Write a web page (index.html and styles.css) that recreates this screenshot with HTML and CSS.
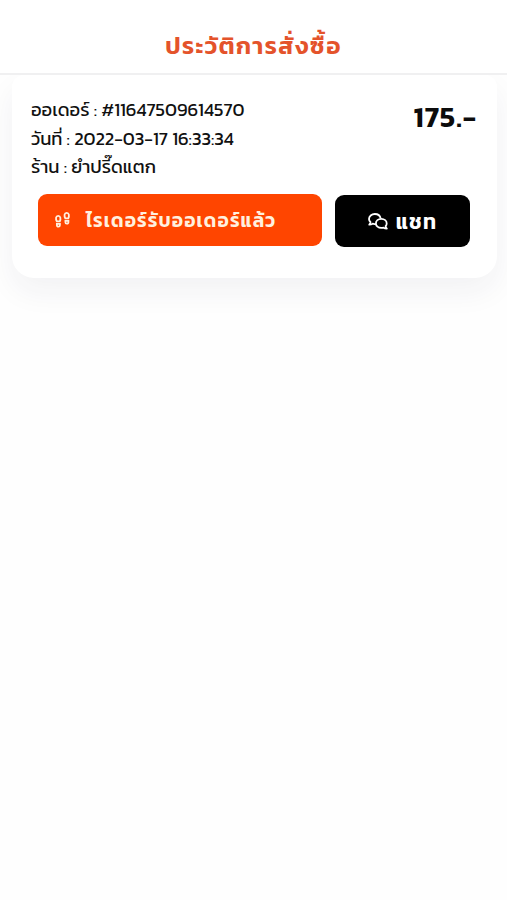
FILE: index.html
```html
<!DOCTYPE html>
<html lang="th">
<head>
<meta charset="utf-8">
<title>ประวัติการสั่งซื้อ</title>
<link rel="stylesheet" href="styles.css">
</head>
<body>
<header class="topbar"><h1 class="title">ประวัติการสั่งซื้อ</h1></header>
<main class="orders">
<article class="card">
<div class="summary">
<div class="details">
<p>ออเดอร์ : #11647509614570</p>
<p>วันที่ : 2022-03-17 16:33:34</p>
<p>ร้าน : ยำปรี๊ดแตก</p>
</div>
<strong class="price">175.-</strong>
</div>
<div class="actions">
<button class="btn status">
<svg class="steps" viewBox="0 0 18 18" fill="none" stroke="currentColor" stroke-width="1.8" aria-hidden="true">
<path d="M2.800 10.300C1.500 8 1.700 4.800 4.200 4.800s2.700 3.200 1.600 5.500z M11.300 7.300C10 5 10.200 1.800 12.700 1.800s2.700 3.200 1.600 5.500z"/>
<path d="M2.900 12.900h3v1.300a1.500 1.500 0 0 1-3 0z M11.400 9.900h3v1.300a1.500 1.500 0 0 1-3 0z"/>
</svg>
<span>ไรเดอร์รับออเดอร์แล้ว</span>
</button>
<button class="btn chat">
<svg class="bubbles" viewBox="0 0 20 17" fill="none" stroke="currentColor" stroke-width="1.8" stroke-linejoin="round" aria-hidden="true">
<path d="M8 10.900c-1.200.3-2.300.200-3.400-.2-1 .7-2.100 1-3.300 1 .7-.8 1.100-1.600 1.200-2.500C1.500 8.200 1 7.200 1 6c0-2.800 2.600-5 5.800-5 3 0 5.400 1.900 5.800 4.400"/>
<path d="M13.300 5.900c3.100 0 5.400 2 5.400 4.500 0 1.100-.4 2-1.100 2.800.1.900.5 1.700 1.200 2.400-1.300 0-2.400-.3-3.300-1-.7.2-1.400.3-2.200.3-3.100 0-5.400-2-5.400-4.500s2.300-4.500 5.400-4.500z"/>
</svg>
<span>แชท</span>
</button>
</div>
</article>
</main>
</body>
</html>
```
FILE: styles.css
```css
* { box-sizing: border-box; }
body { margin: 0; min-height: 900px; background: #fefefe; color: #111; font-family: Kanit, "Noto Sans Thai", "Noto Sans", sans-serif; }
.topbar { position: relative; z-index: 1; height: 75px; display: flex; align-items: center; justify-content: center; background: #fff; border-bottom: 2px solid #f0f0f1; padding-top: 17px; }
.title { margin: 0; font-size: 24px; font-weight: 600; letter-spacing: 1.500px; color: #e4532b; }
.card { margin: 0 10px 0 12px; height: 203px; background: #fff; border-radius: 12px 12px 22px 22px; padding: 20px 21px 0 19px; box-shadow: 0 14px 30px rgba(30, 30, 70, .055); }
.summary { display: flex; justify-content: space-between; height: 99px; }
.details { padding-top: 1px; }
.details p { margin: 0; line-height: 28.700px; font-size: 18.400px; }
.price { font-size: 29px; font-weight: 600; letter-spacing: 1px; margin-right: -1px; line-height: 44px; color: #0c0c0c; }
.actions { display: flex; gap: 13px; margin-left: 7px; }
.btn { display: flex; align-items: center; height: 52px; border: 0; border-radius: 9px; color: #fff; font: 600 19px Kanit, "Noto Sans Thai", "Noto Sans", sans-serif; letter-spacing: 1.150px; white-space: nowrap; }
.status { width: 284px; padding: 0 16px; gap: 14px; background: #ff4500; color: #fff0df; }
.chat { width: 135px; margin-top: 1px; justify-content: center; gap: 8px; font-size: 21px; background: #000; }
.steps { width: 18px; height: 18px; }
.bubbles { width: 20px; height: 17px; }
```
